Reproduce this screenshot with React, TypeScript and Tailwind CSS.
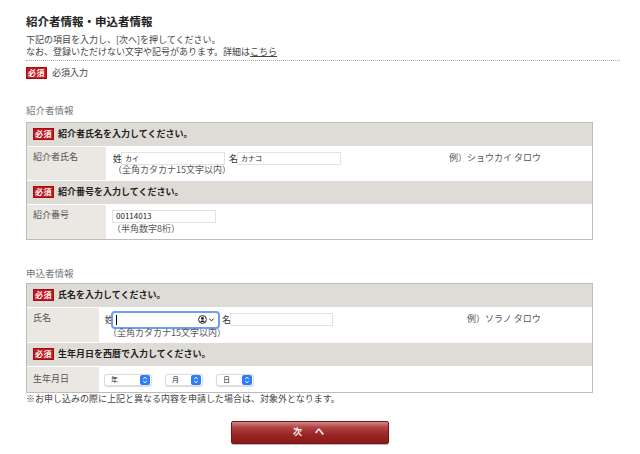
import React from "react";

function Badge() {
  return (
    <span className="inline-flex items-center justify-center w-[21px] h-[12px] bg-[#c8161d] border border-[#a10f14] text-white text-[8px] font-bold leading-none tracking-[0.5px]">
      必須
    </span>
  );
}

function HeadRow({ text }: { text: string }) {
  return (
    <div className="h-[24px] bg-[#dfdbd6] flex items-center gap-[4px] pl-[6px] border-b border-white">
      <Badge />
      <span className="text-[9px] font-semibold text-[#222]">{text}</span>
    </div>
  );
}

function Field({ w, value, className = "" }: { w: string; value?: string; className?: string }) {
  return (
    <div className={`h-[13px] bg-white border border-[#e2e2e2] flex items-center pl-[3px] text-[7px] text-[#222] ${w} ${className}`}>
      {value}
    </div>
  );
}

function FocusField() {
  return (
    <div className="w-[105px] h-[14px] bg-white rounded-[2px] outline outline-2 outline-[#6e9ef0] flex items-center pl-[3px] pr-[3px]">
      <span className="w-px h-[10px] bg-black" />
      <span className="ml-auto flex items-center gap-[1px]">
        <svg width="9" height="9" viewBox="0 0 12 12">
          <circle cx="6" cy="6" r="5.2" fill="none" stroke="#111" strokeWidth="1.2" />
          <circle cx="6" cy="4.6" r="1.8" fill="#111" />
          <path d="M2.8 9.4c.8-1.6 1.9-2.2 3.2-2.2s2.4.6 3.2 2.2" fill="#111" />
        </svg>
        <svg width="7" height="7" viewBox="0 0 8 8">
          <path d="M1.5 3l2.5 2.5L6.5 3" fill="none" stroke="#111" strokeWidth="1.1" />
        </svg>
      </span>
    </div>
  );
}

function Select({ label, w }: { label: string; w: string }) {
  return (
    <div className={`h-[12px] ${w} bg-white rounded-[3px] border border-[#dcdcdc] shadow-[0_0.5px_1px_rgba(0,0,0,0.15)] flex items-center pl-[6px] pr-[1px] text-[7px] text-[#222]`}>
      {label}
      <span className="ml-auto w-[10px] h-[10px] rounded-[2px] bg-[#2f7cf6] flex items-center justify-center">
        <svg width="6" height="8" viewBox="0 0 6 8">
          <path d="M1.2 3L3 1.3 4.8 3M1.2 5L3 6.7 4.8 5" fill="none" stroke="#fff" strokeWidth="1" />
        </svg>
      </span>
    </div>
  );
}

export default function App() {
  return (
    <div className="w-[640px] h-[454px] overflow-hidden bg-white text-[#333] pl-[26px] pt-[13px] font-['Noto_Sans_CJK_JP','Noto_Sans',sans-serif]">
      {/* Page title */}
      <h1 className="text-[11.5px] font-bold leading-[16px] text-[#222]">紹介者情報・申込者情報</h1>
      <div className="w-[594px] mt-[5px] pb-[3px] border-b border-dotted border-[#aaa] text-[9px] leading-[11.5px] text-[#444]">
        <p>下記の項目を入力し、[次へ]を押してください。</p>
        <p>
          なお、登録いただけない文字や記号があります。詳細は<span className="underline">こちら</span>
        </p>
      </div>
      <div className="mt-[5px] flex items-center gap-[5px]">
        <Badge />
        <span className="text-[9px] text-[#444]">必須入力</span>
      </div>

      {/* 紹介者情報 */}
      <h2 className="mt-[24px] text-[9.5px] leading-[12px] text-[#777]">紹介者情報</h2>
      <div className="mt-[6px] w-[567px] border border-[#bcbcbc]">
        <HeadRow text="紹介者氏名を入力してください。" />
        <div className="h-[34px] flex border-b border-white">
          <div className="w-[79px] bg-[#ebe8e4] pl-[6px] pt-[4px] text-[9px] leading-[12px] text-[#555]">紹介者氏名</div>
          <div className="flex-1 flex pl-[7px] pt-[5px]">
            <div className="w-[336px]">
              <div className="flex items-center text-[9px] text-[#333]">
                <span className="w-[8px]">姓</span>
                <Field w="w-[104px]" value="カイ" />
                <span className="ml-[4px] w-[8px]">名</span>
                <Field w="w-[104px]" value="カナコ" />
              </div>
              <p className="text-[9px] leading-[10px] text-[#555]">（全角カタカナ15文字以内）</p>
            </div>
            <p className="text-[9px] leading-[12px] text-[#555]">例）ショウカイ タロウ</p>
          </div>
        </div>
        <HeadRow text="紹介番号を入力してください。" />
        <div className="h-[34px] flex">
          <div className="w-[79px] bg-[#ebe8e4] pl-[6px] pt-[4px] text-[9px] leading-[12px] text-[#555]">紹介番号</div>
          <div className="flex-1 pl-[6px] pt-[5px]">
            <Field w="w-[104px]" value="00114013" className="text-[8px]" />
            <p className="text-[9px] leading-[11px] text-[#555]">（半角数字8桁）</p>
          </div>
        </div>
      </div>

      {/* 申込者情報 */}
      <h2 className="mt-[27px] text-[9.5px] leading-[12px] text-[#777]">申込者情報</h2>
      <div className="mt-[4px] w-[567px] border border-[#bcbcbc]">
        <HeadRow text="氏名を入力してください。" />
        <div className="h-[35px] flex border-b border-white">
          <div className="w-[72px] bg-[#ebe8e4] pl-[6px] pt-[4px] text-[9px] leading-[12px] text-[#555]">氏名</div>
          <div className="flex-1 flex pl-[6px] pt-[5px]">
            <div className="w-[362px]">
              <div className="flex items-center text-[9px] text-[#333]">
                <span className="w-[8px]">姓</span>
                <FocusField />
                <span className="ml-[4px] w-[8px]">名</span>
                <Field w="w-[103px]" />
              </div>
              <p className="pl-[3px] mt-[1px] text-[9px] leading-[10px] text-[#555]">（全角カタカナ15文字以内）</p>
            </div>
            <p className="text-[9px] leading-[12px] text-[#555]">例）ソラノ タロウ</p>
          </div>
        </div>
        <HeadRow text="生年月日を西暦で入力してください。" />
        <div className="h-[25px] flex">
          <div className="w-[72px] bg-[#ebe8e4] pl-[6px] pt-[6px] text-[9px] leading-[12px] text-[#555]">生年月日</div>
          <div className="flex-1 flex items-start gap-[13px] pl-[5px] pt-[7px]">
            <Select label="年" w="w-[48px]" />
            <Select label="月" w="w-[38px]" />
            <Select label="日" w="w-[38px]" />
          </div>
        </div>
      </div>
      <p className="text-[9px] leading-[11px] text-[#444]">※お申し込みの際に上記と異なる内容を申請した場合は、対象外となります。</p>

      {/* Submit */}
      <div className="w-[567px] flex justify-center mt-[17px]">
        <button className="w-[158px] h-[23px] rounded-[2px] border border-[#7a1515] bg-[linear-gradient(to_bottom,#d08a8a_0%,#b14444_25%,#9b2424_60%,#8a1b1b_100%)] shadow-[0_1px_1px_rgba(0,0,0,0.3)] text-white text-[9px] font-bold tracking-[2px]">
          次　へ
        </button>
      </div>
    </div>
  );
}
